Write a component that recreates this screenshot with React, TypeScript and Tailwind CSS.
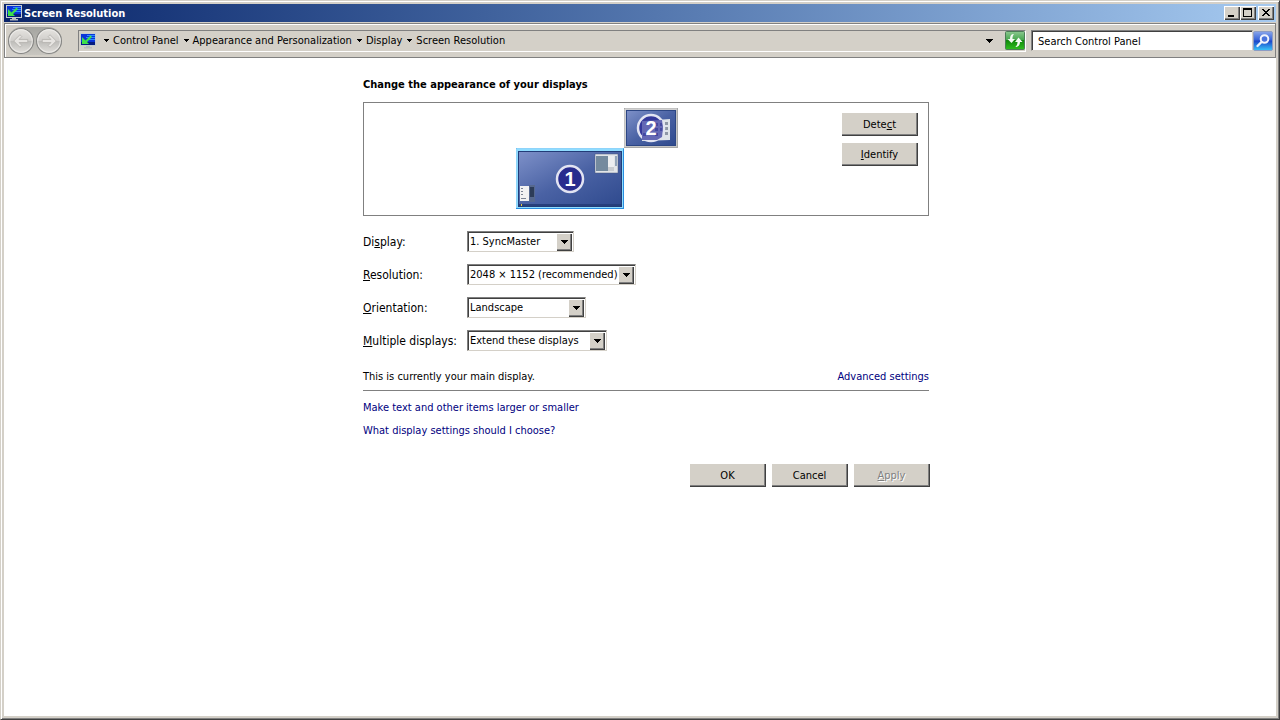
import { FC, ReactNode } from 'react'

const sunken =
  'border border-t-[#808080] border-l-[#808080] border-r-[#ffffff] border-b-[#ffffff]'
const raised =
  'bg-[#d4d0c8] shadow-[inset_1px_1px_0_#ffffff,inset_-1px_-1px_0_#404040,inset_-2px_-2px_0_#808080]'

const MonitorIcon: FC = () => (
  <svg width="16" height="16" viewBox="0 0 16 16">
    <rect x="0.5" y="0.5" width="15" height="12" fill="#e4e4dc" stroke="#c4ccd0" />
    <rect x="1" y="1" width="14" height="11" fill="#0a34d8" />
    <path d="M7 2h8v1H7zM6 4h9v1H6zM8 6h7v1H8z" fill="#2c8cff" />
    <path d="M1 9h14v3H1z" fill="#061c80" />
    <path d="M2 4v7h7L7 9l5-5-1.5-1.5-5 5z" fill="#3ee04a" />
    <path d="M6 13h4v1h2v1.5H4V14h2z" fill="#b8bcc0" />
  </svg>
)

const Caret: FC = () => (
  <svg width="5" height="3" viewBox="0 0 5 3" shapeRendering="crispEdges">
    <path d="M0 0h5v1H0zM1 1h3v1H1zM2 2h1v1H2z" />
  </svg>
)

const DropArrow: FC = () => (
  <svg width="7" height="4" viewBox="0 0 7 4" shapeRendering="crispEdges">
    <path d="M0 0h7v1H0zM1 1h5v1H1zM2 2h3v1H2zM3 3h1v1H3z" />
  </svg>
)

const TitleBar: FC = () => (
  <div className="flex h-[18px] items-center bg-linear-to-r from-[#0a246a] to-[#a6caf0] pl-[2px] pr-[2px]">
    <MonitorIcon />
    <h1 className="ml-[2px] flex-1 pt-px text-[11px] font-bold text-white">
      Screen Resolution
    </h1>
    <button aria-label="Minimize" className={`h-[14px] w-4 ${raised}`}>
      <svg width="16" height="14" viewBox="0 0 16 14">
        <path d="M4 9h6v2H4z" />
      </svg>
    </button>
    <button aria-label="Maximize" className={`h-[14px] w-4 ${raised}`}>
      <svg width="16" height="14" viewBox="0 0 16 14" shapeRendering="crispEdges">
        <path d="M3 2h9v9H3zM4 4v6h7V4z" fillRule="evenodd" />
      </svg>
    </button>
    <button aria-label="Close" className={`ml-[2px] h-[14px] w-4 ${raised}`}>
      <svg width="16" height="14" viewBox="0 0 16 14" shapeRendering="crispEdges">
        <path d="M4 3h2v1h1v1h2V4h1V3h2v1h-1v1h-1v1H9v1h1v1h1v1h1v1h-2V9H9V8H7v1H6v1H4V9h1V8h1V7h1V6H6V5H5V4H4z" />
      </svg>
    </button>
  </div>
)

const HistoryButtons: FC = () => (
  <div className="flex h-7 w-[54px] items-center justify-between rounded-full bg-linear-to-b from-[#a4a4a0] to-[#c8c6c0]">
    {['Back', 'Forward'].map(name => (
      <button key={name} aria-label={name} disabled>
        <svg width="26" height="26" viewBox="0 0 25 25" className="block">
          <defs>
            <linearGradient id={`fill${name}`} x2="0" y2="1">
              <stop offset="0" stopColor="#e6e4e0" />
              <stop offset="0.48" stopColor="#d0cecb" />
              <stop offset="0.5" stopColor="#bcbbb8" />
              <stop offset="1" stopColor="#e2e0dc" />
            </linearGradient>
          </defs>
          <circle cx="12.5" cy="12.5" r="12" fill={`url(#fill${name})`} stroke="#858583" />
          <circle cx="12.5" cy="12.5" r="10.8" fill="none" stroke="#efeeeb" strokeOpacity="0.8" />
          <path
            d="M5.5 12.5l6-6 1.8 1.8-2.7 2.7h8.400v3h-8.400l2.700 2.700-1.800 1.800z"
            transform={name === 'Forward' ? 'rotate(180 12.5 12.5)' : undefined}
            fill="#e6e4e1"
            stroke="#b4b2ae"
            strokeWidth="0.8"
          />
        </svg>
      </button>
    ))}
  </div>
)

const crumbs = [
  'Control Panel',
  'Appearance and Personalization',
  'Display',
  'Screen Resolution',
]

const NavBar: FC = () => (
  <header className="mt-px flex h-[35px] items-center border border-[#808080] pr-[2px] pl-[3px] shadow-[inset_1px_1px_0_#ffffff]">
    <HistoryButtons />
    <nav className={`ml-4 flex h-[22px] flex-1 items-center pl-px ${sunken}`}>
      <MonitorIcon />
      {crumbs.map((crumb, i) => (
        <span key={crumb} className={`flex items-center ${i === 0 ? 'ml-2' : 'ml-[5px]'}`}>
          <Caret />
          <a href="#" className="ml-1">
            {crumb}
          </a>
        </span>
      ))}
      <button aria-label="Previous locations" className="mr-3 ml-auto">
        <DropArrow />
      </button>
      <button aria-label="Refresh">
        <svg width="20" height="19" viewBox="0 0 20 19" className="block">
          <defs>
            <linearGradient id="refresh" x2="0" y2="1">
              <stop offset="0" stopColor="#8cc890" />
              <stop offset="0.45" stopColor="#48a850" />
              <stop offset="0.5" stopColor="#10880c" />
              <stop offset="1" stopColor="#30c020" />
            </linearGradient>
          </defs>
          <rect x="0.5" y="0.5" width="19" height="18" rx="1" fill="url(#refresh)" stroke="#4c7c58" />
          <path
            d="M8 3C6 3.500 5 5 5 8H2.500L6.500 12 10 8H7.500C7.500 6 7.600 4.500 9 3.500z"
            fill="#f4faf4"
          />
          <path
            d="M11 16c2.500-.5 4-2 4-5h2.500L13.500 6.500 10 11h2.500c0 2-.5 3.500-2 4.500z"
            fill="#f4faf4"
          />
        </svg>
      </button>
    </nav>
    <input
      type="search"
      aria-label="Search Control Panel"
      placeholder="Search Control Panel"
      className="ml-[5px] h-[21px] w-[222px] appearance-none border border-t-[#808080] border-r-[#d4d0c8] border-b-[#d4d0c8] border-l-[#808080] bg-white pt-px pl-[6px] shadow-[inset_1px_1px_0_#404040] outline-none placeholder:text-black"
    />
    <button aria-label="Search">
      <svg width="20" height="20" viewBox="0 0 20 20" className="block">
        <defs>
          <linearGradient id="search" x2="0" y2="1">
            <stop offset="0" stopColor="#8aa6ea" />
            <stop offset="0.45" stopColor="#3562d8" />
            <stop offset="0.5" stopColor="#1c44c8" />
            <stop offset="1" stopColor="#38c8fa" />
          </linearGradient>
        </defs>
        <rect x="0.5" y="0.5" width="19" height="19" rx="1.5" fill="url(#search)" stroke="#8c9cc4" />
        <circle cx="11.5" cy="8" r="3.8" fill="#4a74dc" stroke="#f0f4fc" strokeWidth="2" />
        <path d="M8.5 11L4.5 15" stroke="#f0f4fc" strokeWidth="2.4" strokeLinecap="round" />
      </svg>
    </button>
  </header>
)

const Displays: FC = () => (
  <svg width="162" height="101" viewBox="0 0 162 101" role="img" aria-label="Display arrangement">
    <defs>
      <linearGradient id="screen" x2="1" y2="1">
        <stop offset="0" stopColor="#7d90c8" />
        <stop offset="0.5" stopColor="#4a62a4" />
        <stop offset="1" stopColor="#2f4a8e" />
      </linearGradient>
    </defs>
    {/* second display */}
    <rect x="108.5" y="0.5" width="53" height="39" fill="#c4c4c4" stroke="#a8a8a8" />
    <path d="M109 39V1h52" fill="none" stroke="#dedede" />
    <rect x="110" y="2" width="50" height="36" fill="#2c4684" />
    <rect x="111" y="3" width="48" height="34" fill="url(#screen)" />
    <path d="M126 13l28-2v21l-28 1z" fill="#dfe3ea" />
    <path d="M149 14h3v3h-3zM149 19h3v3h-3zM149 24h3v3h-3z" fill="#8e96a6" />
    <circle cx="135" cy="20" r="13" fill="#34389a" stroke="#e2e4f2" strokeWidth="2.5" />
    <path d="M126 13l20-1 1 8-1 9-5 3H126z" fill="#6468b4" />
    <path d="M139 15h3v3h-3zM139 20h3v3h-3zM139 25h3v3h-3zM127 25h3v3h-3zM144 15h2v3h-2zM144 20h2v3h-2z" fill="#4448a0" />
    <text
      x="135"
      y="27"
      textAnchor="middle"
      className="fill-white font-['Liberation_Sans',Arial,sans-serif] text-[20px] font-bold"
    >
      2
    </text>
    {/* main display, selected */}
    <rect x="0.5" y="40.5" width="107" height="60" fill="#8fdcff" stroke="#2a8ee0" />
    <path d="M0.5 100V40.5h107" fill="none" stroke="#8fd4fa" />
    <rect x="2" y="43" width="104" height="56" fill="#223c78" />
    <rect x="3" y="44" width="102" height="54" fill="url(#screen)" />
    <path d="M3 96h102v2H3z" fill="#263f7c" />
    <path d="M5 96h1v2H5z" fill="#e8c840" />
    <rect x="79" y="46" width="23" height="19" fill="#e2e5e8" stroke="#4a5a7c" strokeWidth="0.5" />
    <rect x="80" y="48" width="12" height="15" fill="#748a9e" />
    <path d="M92 48h6v11h-6z" fill="#eceef0" />
    <path d="M92 59h6v4h-6z" fill="#c8ccd0" />
    <rect x="99" y="48" width="2" height="10" fill="#93a5b8" />
    <rect x="13" y="77" width="6" height="17" fill="#56688e" />
    <rect x="14" y="79" width="4" height="10" fill="#2c3c58" />
    <rect x="4" y="78" width="9" height="15" fill="#f2f2f2" />
    <path d="M5 80h2v1H5zM5 83h2v1H5zM5 86h2v1H5zM5 90h5v1H5z" fill="#7c8494" />
    <circle cx="54" cy="71" r="13" fill="#282c8e" stroke="#e2e4f2" strokeWidth="2.5" />
    <text
      x="54"
      y="78"
      textAnchor="middle"
      className="fill-white font-['Liberation_Sans',Arial,sans-serif] text-[20px] font-bold"
    >
      1
    </text>
  </svg>
)

const PushButton: FC<{ children: ReactNode; disabled?: boolean }> = ({
  children,
  disabled,
}) => (
  <button
    disabled={disabled}
    className={`h-6 w-[77px] pt-px disabled:text-[#808080] disabled:text-shadow-[1px_1px_0_#ffffff] ${raised}`}
  >
    {children}
  </button>
)

interface FieldProps {
  id: string
  label: ReactNode
  value: string
  width: string
}

const Field: FC<FieldProps> = ({ id, label, value, width }) => (
  <div className="flex items-center">
    <label htmlFor={id} className="w-[104px] text-[12px]">
      {label}
    </label>
    <div
      className={`flex h-[21px] border border-t-[#808080] border-r-[#d4d0c8] border-b-[#d4d0c8] border-l-[#808080] bg-white pr-px shadow-[inset_1px_1px_0_#404040] ${width}`}
    >
      <select id={id} className="min-w-0 flex-1 appearance-none pt-px pl-[2px] outline-none">
        <option>{value}</option>
      </select>
      <span className={`pointer-events-none mt-px flex w-4 items-center justify-center ${raised}`}>
        <DropArrow />
      </span>
    </div>
  </div>
)

export default function App() {
  return (
    <div className="flex min-h-screen flex-col border border-t-[#d4d0c8] border-r-[#404040] border-b-[#404040] border-l-[#d4d0c8] bg-[#d4d0c8] p-[3px] font-['DejaVu_Sans_Condensed',Tahoma,sans-serif] text-[11px] leading-4 text-black shadow-[inset_1px_1px_0_#ffffff,inset_-1px_-1px_0_#808080]">
      <TitleBar />
      <NavBar />
      <main className="flex-1 bg-white pl-3">
        <div className="mx-auto w-full max-w-[566px] pt-[19px]">
          <h2 className="font-bold">Change the appearance of your displays</h2>
          <section className="mt-[9px] flex h-[114px] border border-[#808080] pr-[10px]">
            <div className="flex flex-1 justify-center pt-[5px] pr-[11px]">
              <Displays />
            </div>
            <div className="flex flex-col gap-[6px] pt-[9px]">
              <PushButton>
                Dete<u>c</u>t
              </PushButton>
              <PushButton>
                <u>I</u>dentify
              </PushButton>
            </div>
          </section>
          <div className="mt-[15px] flex flex-col gap-3">
            <Field id="display" label={<>Di<u>s</u>play:</>} value="1. SyncMaster" width="w-[107px]" />
            <Field id="resolution" label={<><u>R</u>esolution:</>} value="2048 × 1152 (recommended)" width="w-[169px]" />
            <Field id="orientation" label={<><u>O</u>rientation:</>} value="Landscape" width="w-[119px]" />
            <Field id="multiple" label={<><u>M</u>ultiple displays:</>} value="Extend these displays" width="w-[140px]" />
          </div>
          <div className="mt-[18px] flex justify-between border-b border-[#808080] pb-[5px]">
            <p>This is currently your main display.</p>
            <a href="#" className="text-[#000080]">
              Advanced settings
            </a>
          </div>
          <div className="mt-[9px] flex flex-col items-start gap-[7px] text-[#000080]">
            <a href="#">Make text and other items larger or smaller</a>
            <a href="#">What display settings should I choose?</a>
          </div>
          <div className="mt-6 -mr-px flex justify-end gap-[5px]">
            <PushButton>OK</PushButton>
            <PushButton>Cancel</PushButton>
            <PushButton disabled>
              <u>A</u>pply
            </PushButton>
          </div>
        </div>
      </main>
    </div>
  )
}
